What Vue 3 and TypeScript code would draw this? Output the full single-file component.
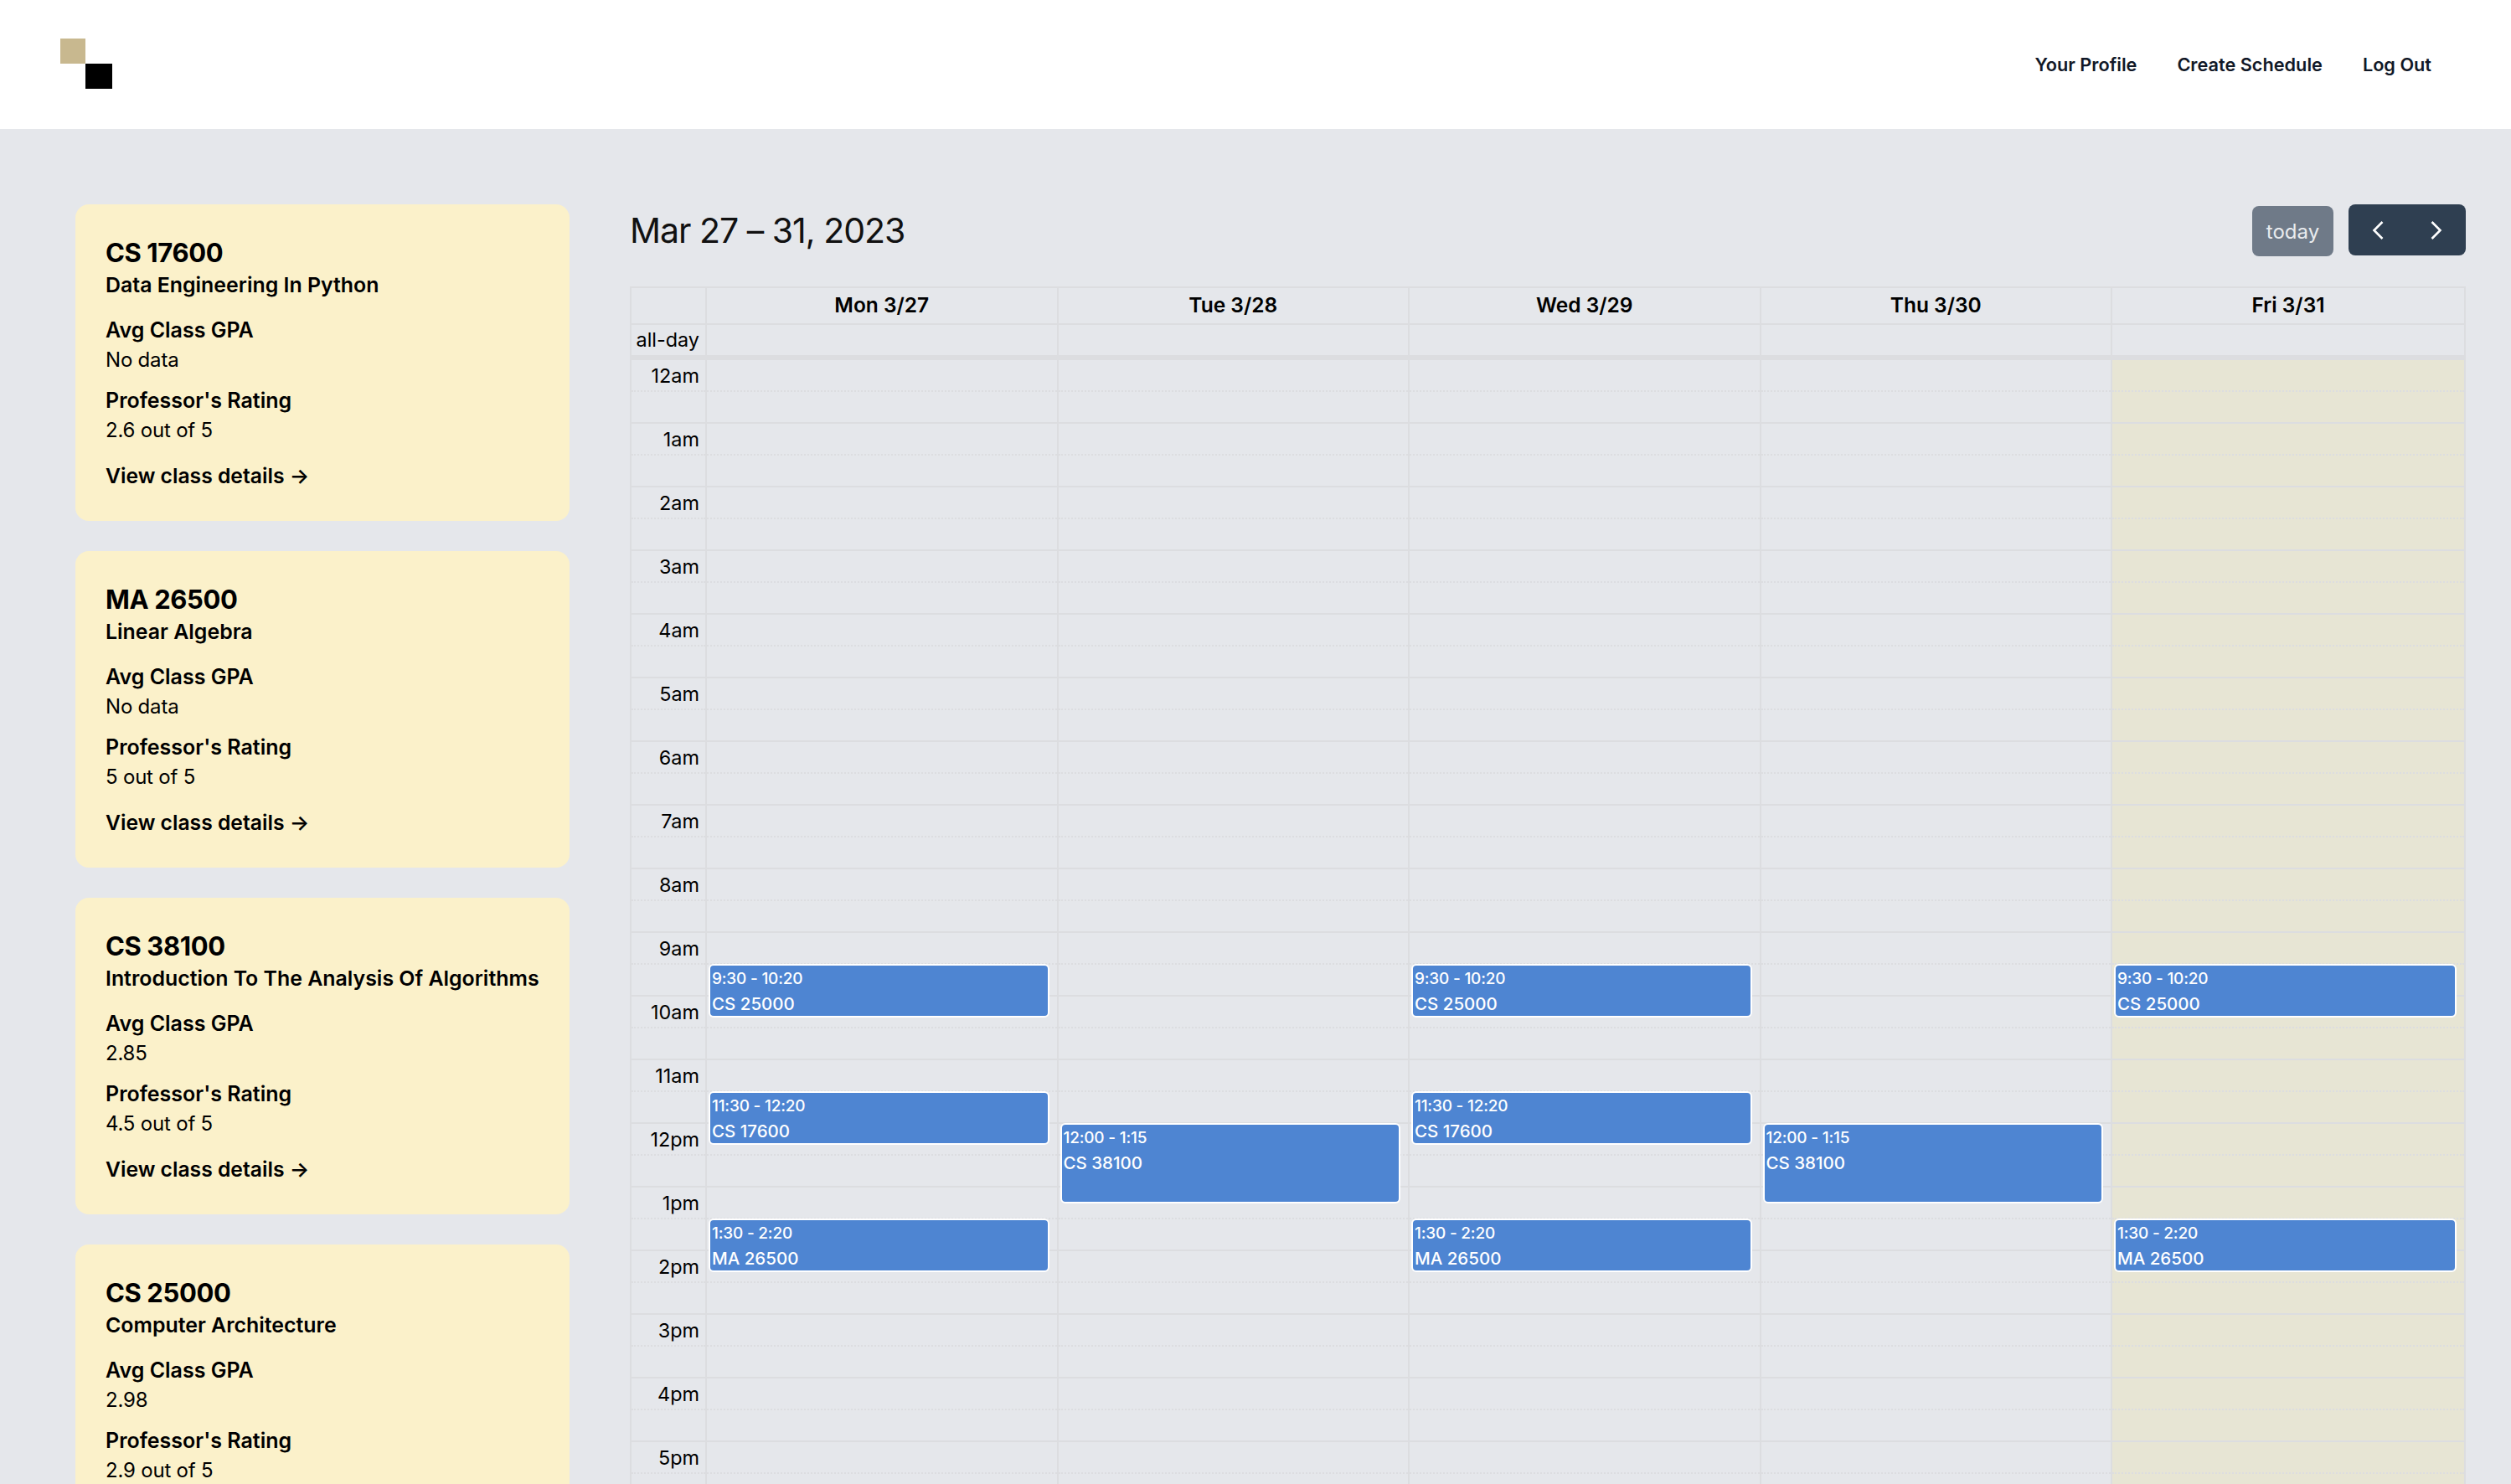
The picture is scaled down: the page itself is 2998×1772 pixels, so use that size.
<script setup lang="ts">
interface Course {
  code: string;
  name: string;
  gpa: string;
  rating: string;
}

interface CalEvent {
  time: string;
  title: string;
  start: number;
  end: number;
}

interface Day {
  label: string;
  today?: boolean;
  events: CalEvent[];
}

const courses: Course[] = [
  { code: "CS 17600", name: "Data Engineering In Python", gpa: "No data", rating: "2.6 out of 5" },
  { code: "MA 26500", name: "Linear Algebra", gpa: "No data", rating: "5 out of 5" },
  { code: "CS 38100", name: "Introduction To The Analysis Of Algorithms", gpa: "2.85", rating: "4.5 out of 5" },
  { code: "CS 25000", name: "Computer Architecture", gpa: "2.98", rating: "2.9 out of 5" },
];

const HOUR = 76;

const mwf: CalEvent[] = [
  { time: "9:30 - 10:20", title: "CS 25000", start: 9.5, end: 10 + 1 / 3 },
  { time: "11:30 - 12:20", title: "CS 17600", start: 11.5, end: 12 + 1 / 3 },
  { time: "1:30 - 2:20", title: "MA 26500", start: 13.5, end: 14 + 1 / 3 },
];
const tt: CalEvent[] = [{ time: "12:00 - 1:15", title: "CS 38100", start: 12, end: 13.25 }];

const days: Day[] = [
  { label: "Mon 3/27", events: mwf },
  { label: "Tue 3/28", events: tt },
  { label: "Wed 3/29", events: mwf },
  { label: "Thu 3/30", events: tt },
  { label: "Fri 3/31", today: true, events: mwf.filter((e) => e.title !== "CS 17600") },
];

const hours: string[] = [];
for (let h = 0; h < 24; h++) {
  hours.push(`${h % 12 === 0 ? 12 : h % 12}${h < 12 ? "am" : "pm"}`);
}

function eventStyle(e: CalEvent) {
  return {
    top: `${e.start * HOUR - 1}px`,
    height: `${(e.end - e.start) * HOUR + 1}px`,
  };
}
</script>

<template>
  <div class="page">
    <header class="topbar">
      <div class="logo" aria-label="logo">
        <i class="logo-gold" />
        <i class="logo-black" />
      </div>
      <nav class="nav">
        <a>Your Profile</a>
        <a>Create Schedule</a>
        <a>Log Out</a>
      </nav>
    </header>

    <main class="main">
      <aside class="courses">
        <section v-for="c in courses" :key="c.code" class="card">
          <h2 class="code">{{ c.code }}</h2>
          <h3 class="name">{{ c.name }}</h3>
          <div class="label first">Avg Class GPA</div>
          <div class="value">{{ c.gpa }}</div>
          <div class="label">Professor's Rating</div>
          <div class="value">{{ c.rating }}</div>
          <a class="details">View class details →</a>
        </section>
      </aside>

      <section class="calendar">
        <div class="toolbar">
          <h1 class="range">Mar 27 – 31, 2023</h1>
          <div class="actions">
            <button class="today-btn" type="button">today</button>
            <div class="nav-group">
              <button type="button" aria-label="prev">
                <svg width="14" height="24" viewBox="0 0 14 24"><path d="M12.5 2 2.5 12l10 10" /></svg>
              </button>
              <button type="button" aria-label="next">
                <svg width="14" height="24" viewBox="0 0 14 24"><path d="M1.5 2l10 10-10 10" /></svg>
              </button>
            </div>
          </div>
        </div>

        <div class="grid">
          <div class="row head">
            <div class="axis" />
            <div v-for="d in days" :key="d.label" class="cell">{{ d.label }}</div>
          </div>
          <div class="row allday">
            <div class="axis">all-day</div>
            <div v-for="d in days" :key="d.label" class="cell" />
          </div>
          <div class="divider" />
          <div class="row body">
            <div class="axis">
              <div v-for="h in hours" :key="h" class="hour-label">
                <div class="slot major-top">{{ h }}</div>
                <div class="slot minor" />
              </div>
            </div>
            <div v-for="d in days" :key="d.label" class="cell lane" :class="{ today: d.today }">
              <template v-for="h in hours" :key="h">
                <div class="slot major-top" />
                <div class="slot minor" />
              </template>
              <div v-for="e in d.events" :key="e.title" class="event" :style="eventStyle(e)">
                <div class="event-time">{{ e.time }}</div>
                <div class="event-title">{{ e.title }}</div>
              </div>
            </div>
          </div>
        </div>
      </section>
    </main>
  </div>
</template>

<style>
html,
body {
  margin: 0;
  overflow: hidden;
  background: #e5e7eb;
}
</style>

<style scoped>
.page {
  height: 1772px;
  overflow: hidden;
  background: #e5e7eb;
  color: #000;
  font-family: Inter, "Liberation Sans", sans-serif;
}

.topbar {
  display: flex;
  align-items: center;
  justify-content: space-between;
  height: 154px;
  padding: 0 95px 0 72px;
  background: #fff;
}

.logo {
  display: grid;
  grid-template-columns: 30px 32px;
  grid-template-rows: 30px 30px;
  margin-bottom: 2px;
}

.logo-gold {
  background: #c8b88f;
}

.logo-black {
  grid-column: 2;
  grid-row: 2;
  background: #000;
}

.nav {
  display: flex;
  gap: 48px;
  font-size: 21.7px;
  font-weight: 600;
  color: #111827;
}

.main {
  display: flex;
  gap: 72px;
  padding: 90px 54px 0 90px;
}

.courses {
  display: flex;
  flex: 0 0 590px;
  flex-direction: column;
  gap: 36px;
  min-width: 0;
  width: 590px;
}

.card {
  height: 378px;
  box-sizing: border-box;
  padding: 38px 36px 36px;
  border-radius: 16px;
  background: #fbf1ca;
}

.code {
  margin: 0;
  font-size: 31px;
  font-weight: 700;
  line-height: 40px;
  letter-spacing: -0.4px;
}

.name {
  margin: 0;
  font-size: 24.9px;
  font-weight: 600;
  line-height: 36px;
  white-space: nowrap;
}

.label {
  margin-top: 12px;
  font-size: 25px;
  font-weight: 600;
  line-height: 36px;
}

.label.first {
  margin-top: 18px;
}

.value {
  font-size: 24px;
  line-height: 36px;
  letter-spacing: -0.2px;
}

.details {
  display: block;
  margin-top: 18px;
  font-size: 24.7px;
  font-weight: 600;
  line-height: 36px;
}

.calendar {
  flex: 1;
  min-width: 0;
}

.toolbar {
  display: flex;
  align-items: center;
  justify-content: space-between;
  height: 62px;
  margin-bottom: 36px;
}

.range {
  margin: 0;
  font-size: 41px;
  font-weight: 400;
  line-height: 62px;
  letter-spacing: -1px;
  color: #111;
}

.actions {
  display: flex;
  gap: 18px;
  align-items: flex-start;
}

.today-btn {
  width: 97px;
  height: 60px;
  margin-top: 2px;
  padding: 0;
  border: 0;
  border-radius: 8px;
  background: #6f7a88;
  color: #e9ebee;
  font: 400 24px Inter, sans-serif;
}

.nav-group {
  display: flex;
  width: 140px;
  height: 61px;
  overflow: hidden;
  border-radius: 8px;
  background: #2f3f51;
}

.nav-group button {
  display: flex;
  flex: 1;
  align-items: center;
  justify-content: center;
  padding: 0;
  border: 0;
  background: none;
}

.nav-group svg path {
  fill: none;
  stroke: #fff;
  stroke-width: 2.6;
}

.grid {
  border: 2px solid #dcdde0;
  border-bottom: 0;
  font-size: 23.4px;
}

.row {
  display: grid;
  grid-template-columns: 88px repeat(4, 419.5px) 1fr;
}

.axis {
  text-align: right;
}

.cell {
  border-left: 2px solid #dcdde0;
}

.head {
  height: 42px;
  border-bottom: 2px solid #dcdde0;
  font-size: 24.5px;
  font-weight: 600;
  line-height: 40px;
}

.head .cell {
  text-align: center;
}

.allday {
  height: 36px;
  line-height: 36px;
}

.allday .axis {
  padding-right: 7px;
}

.divider {
  height: 6px;
  background: #dcdde0;
}

.slot {
  box-sizing: border-box;
  height: 38px;
  padding-right: 7px;
  border-bottom: 2px dotted #dcdde0;
  line-height: 38px;
}

.slot.minor {
  border-bottom-style: solid;
}

.lane {
  position: relative;
}

.lane.today {
  background: #e7e5d4;
}

.event {
  position: absolute;
  left: 2px;
  right: 9px;
  box-sizing: border-box;
  padding: 2px 2px 0;
  overflow: hidden;
  border: 2px solid #fff;
  border-radius: 6px;
  background: #4e85d2;
  color: #fff;
  font-weight: 500;
}

.event-time {
  font-size: 19px;
  line-height: 28px;
  letter-spacing: -0.2px;
}

.event-title {
  font-size: 20.5px;
  line-height: 32px;
}
</style>
